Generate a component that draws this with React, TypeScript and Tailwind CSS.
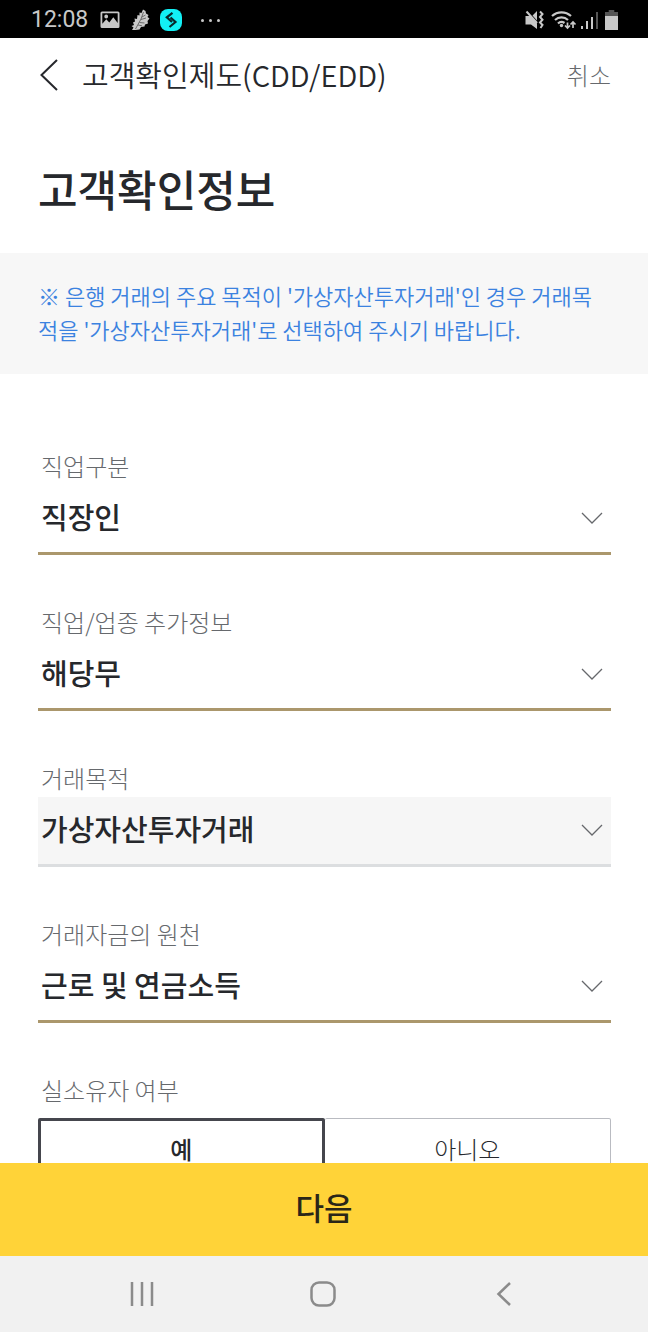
import { useState } from "react";

interface SelectFieldProps {
  id: string;
  label: string;
  options: string[];
  muted?: boolean;
}

const purposeFields: SelectFieldProps[] = [
  { id: "job", label: "직업구분", options: ["직장인", "자영업자", "학생", "주부"] },
  { id: "industry", label: "직업/업종 추가정보", options: ["해당무", "해당유"] },
  { id: "purpose", label: "거래목적", options: ["가상자산투자거래", "급여 및 생활비", "저축"], muted: true },
  { id: "source", label: "거래자금의 원천", options: ["근로 및 연금소득", "사업소득", "상속/증여"] },
];

const ownerOptions = ["예", "아니오"];

function StatusBar() {
  return (
    <div className="flex h-[38px] shrink-0 items-center justify-between bg-black pt-0.5 pr-[30px] pl-[31px] text-[#c8c8c8]">
      <div className="flex items-center">
        <span className="font-['Roboto',sans-serif] text-[23px] leading-9">12:08</span>
        <svg className="ml-3 h-[18px] w-5" viewBox="0 0 20 18" fill="none">
          <path
            fill="currentColor"
            fillRule="evenodd"
            d="M2 0.5h16a1.5 1.5 0 0 1 1.5 1.5v13.5a1.5 1.5 0 0 1-1.5 1.5H2A1.5 1.5 0 0 1 .5 15.5V2A1.5 1.5 0 0 1 2 .5ZM2.3 2.3v10.5l4-4.6 3 3.2 4-5.2 4.4 5.8V2.3ZM6.2 3.6a1.9 1.9 0 1 1 0 3.8 1.9 1.9 0 0 1 0-3.8Z"
          />
        </svg>
        <svg className="ml-[11px] h-[23px] w-[19px]" viewBox="0 0 19 23" fill="none">
          <path
            fill="currentColor"
            d="M12 0.5l2.500 1.500 .5 2.500 2.500 1.500-1 2 2 1.500-2 2.500 .5 2.500-3 1-.5 2-3.500 .5-1.500 2.500-4 .5L1 21l1.500-2.500L.5 17l2.500-1L2 13.500l2-1-.5-3 2.500 .5 .5-4 2 .5V3.500l2 .5z"
          />
          <path stroke="#444" strokeWidth="0.700" d="M12.500 3L10 10 4.500 20M11 8l3.500-2M10 10.500l5-1.500M8.500 13.500l5 .5M7 16l4 .8" />
        </svg>
        <svg className="ml-2.5 size-[22px]" viewBox="0 0 22 22" fill="none">
          <rect width="22" height="22" rx="8" fill="#12f0f5" />
          <path stroke="#07282c" strokeWidth="2.200" d="M12.500 3.800L6.800 8.300l5.200 4.700M10.500 8.500l5 4.500-6 5" />
        </svg>
        <span className="ml-[19px] flex gap-[5px]">
          <i className="size-[3px] rounded-full bg-[#c8c8c8]" />
          <i className="size-[3px] rounded-full bg-[#c8c8c8]" />
          <i className="size-[3px] rounded-full bg-[#c8c8c8]" />
        </span>
      </div>
      <div className="flex items-center">
        <svg className="h-5 w-5" viewBox="0 0 20 20" fill="none">
          <path fill="currentColor" d="M0.500 6h4.500l7 7.500V19L6 14.500H.5zM12 1v9.500L7.500 5.500z" />
          <path stroke="currentColor" strokeWidth="2" d="M1.500 1.500L12 13" />
          <path stroke="currentColor" strokeWidth="2" d="M15 1.500l2.500 2.500L15 7l2.500 2.800L15 12.500l2.500 2.500L15.500 18" />
        </svg>
        <svg className="ml-1.5 h-5 w-[26px]" viewBox="0 0 26 20" fill="none" stroke="currentColor">
          <path strokeWidth="2.200" d="M1 6a14 14 0 0 1 19 0M4 10a9.500 9.500 0 0 1 13 0M7 13.500a5 5 0 0 1 6.500-.5" />
          <circle cx="10.500" cy="15.500" r="1.700" fill="currentColor" stroke="none" />
          <path strokeWidth="1.700" d="M16.500 12.500v6M14 15.500l2.500 2.500 2.500-2.500M22 18v-6M19.500 14.500L22 12l2.500 2.500" />
        </svg>
        <svg className="ml-1 h-[18px] w-[18px]" viewBox="0 0 18 18">
          <path fill="currentColor" d="M0 15h2v3H0zM5 10h2v8H5zM10 6h2v12h-2z" />
          <path fill="#555" d="M15 1h2v17h-2z" />
        </svg>
        <svg className="ml-1.5 h-5 w-[13px]" viewBox="0 0 14 20" preserveAspectRatio="none">
          <path fill="#555" d="M4 0h6v2h4v5H0V2h4z" />
          <path fill="currentColor" d="M0 6h14v14H0z" />
        </svg>
      </div>
    </div>
  );
}

function SelectField({ id, label, options, muted }: SelectFieldProps) {
  return (
    <div>
      <label htmlFor={id} className="block pb-0.5 pl-[3px] text-[24px] leading-[34px] font-light text-[#66696d]">
        {label}
      </label>
      <div className="relative">
        <select
          id={id}
          className={
            muted
              ? "block h-[70px] w-full appearance-none border-b-3 border-[#dcdee0] bg-[#f6f6f6] pr-12 pb-1 pl-[3px] text-[29px] font-medium text-[#26282c] outline-none"
              : "block h-[70px] w-full appearance-none border-b-3 border-[#ab976c] bg-white pr-12 pb-1 pl-[3px] text-[29px] font-medium text-[#26282c] outline-none"
          }
        >
          {options.map((option) => (
            <option key={option}>{option}</option>
          ))}
        </select>
        <svg
          className="pointer-events-none absolute top-[27px] right-2 h-3 w-[22px]"
          viewBox="0 0 22 12"
          fill="none"
          stroke="#66686c"
          strokeWidth="1.300"
        >
          <path d="M1 1l10 10L21 1" />
        </svg>
      </div>
    </div>
  );
}

export default function App() {
  const [owner, setOwner] = useState("예");

  return (
    <div className="flex h-screen flex-col bg-white font-['Noto_Sans_CJK_KR',sans-serif] text-[#26282c]">
      <StatusBar />

      <header className="flex h-[74px] shrink-0 items-center pr-[37px] pl-10">
        <button type="button" aria-label="뒤로">
          <svg className="h-8 w-[18px]" viewBox="0 0 18 32" fill="none" stroke="#26282c" strokeWidth="2">
            <path d="M17 1L1.500 16 17 31" />
          </svg>
        </button>
        <span className="ml-6 flex-1 pb-0.5 text-[29px] leading-10 font-[350]">고객확인제도(CDD/EDD)</span>
        <button type="button" className="text-[24px] leading-10 font-light text-[#66696d]">
          취소
        </button>
      </header>

      <main className="min-h-0 flex-1 overflow-y-auto [scrollbar-width:none]">
        <h1 className="px-[38px] pt-[46px] pb-[35px] text-[43px] leading-[60px] font-medium">고객확인정보</h1>

        <p className="bg-[#f7f7f7] pt-[25px] pr-[37px] pb-7 pl-[38px] text-[22px] leading-[34px] font-[350] break-all text-[#3b82e0]">
          ※ 은행 거래의 주요 목적이 '가상자산투자거래'인 경우 거래목적을 '가상자산투자거래'로 선택하여 주시기 바랍니다.
        </p>

        <form className="flex flex-col gap-[50px] pt-[75px] pr-[37px] pb-12 pl-[38px]">
          {purposeFields.map((field) => (
            <SelectField key={field.id} {...field} />
          ))}

          <fieldset>
            <legend className="pb-0.5 pl-[3px] text-[24px] leading-[34px] font-light text-[#66696d]">
              실소유자 여부
            </legend>
            <div className="mt-[9px] grid grid-cols-2">
              {ownerOptions.map((option) => (
                <label
                  key={option}
                  className={
                    owner === option
                      ? "relative flex h-[66px] items-center justify-center rounded-xs border-3 border-[#45464d] pb-1 text-[24px] font-medium"
                      : "relative flex h-[66px] items-center justify-center rounded-xs border border-[#b9bbc1] pb-1 text-[24px] font-light first:border-r-0 last:border-l-0"
                  }
                >
                  <input
                    type="radio"
                    name="owner"
                    value={option}
                    checked={owner === option}
                    onChange={() => setOwner(option)}
                    className="sr-only"
                  />
                  {option}
                </label>
              ))}
            </div>
          </fieldset>
        </form>
      </main>

      <button type="button" className="h-[93px] shrink-0 bg-[#ffd338] pb-1 text-[31px] font-medium text-[#2a2618]">
        다음
      </button>

      <nav className="flex h-19 shrink-0 items-center justify-center gap-[155px] bg-[#f1f1f1] pr-0.5 text-[#8b8b8b]">
        <button type="button" aria-label="최근 앱">
          <svg className="h-[26px] w-[26px]" viewBox="0 0 26 26" stroke="currentColor" strokeWidth="2.500">
            <path d="M3 1v24M13 1v24M23 1v24" />
          </svg>
        </button>
        <button type="button" aria-label="홈">
          <svg className="h-[26px] w-[26px]" viewBox="0 0 26 26" fill="none" stroke="currentColor" strokeWidth="2.500">
            <rect x="1.500" y="1.500" width="23" height="23" rx="7.500" />
          </svg>
        </button>
        <button type="button" aria-label="이전">
          <svg className="h-[26px] w-[26px]" viewBox="0 0 26 26" fill="none" stroke="currentColor" strokeWidth="2.500">
            <path d="M19 2L7.500 13 19 24" />
          </svg>
        </button>
      </nav>
    </div>
  );
}
